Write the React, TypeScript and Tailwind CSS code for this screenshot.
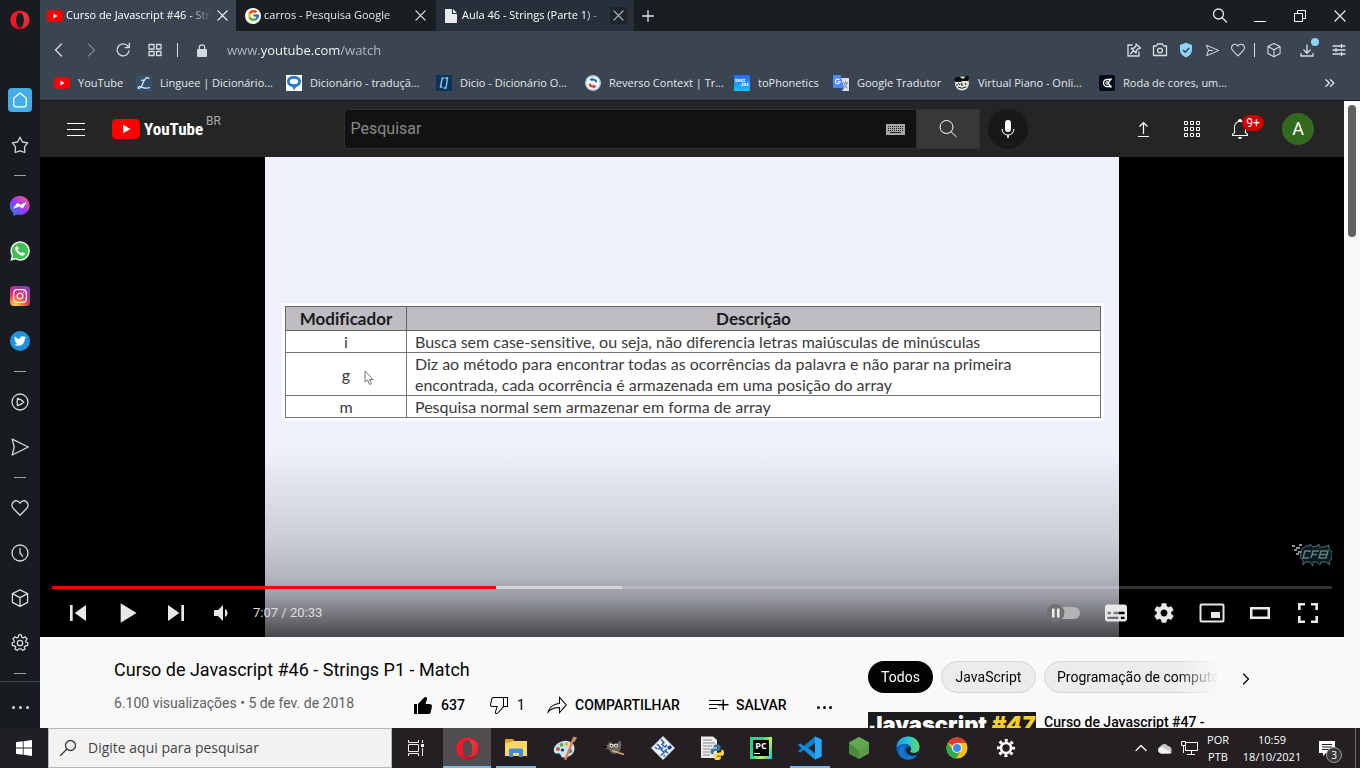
import React from "react";
import type { ReactNode } from "react";
import { FaFacebookMessenger, FaInstagram, FaTwitter } from "react-icons/fa6";
import { FcGoogle } from "react-icons/fc";

type IconProps = {
  className?: string;
  box?: string;
  children: ReactNode;
};

function Line({ className = "size-5", box = "0 0 20 20", children }: IconProps) {
  return (
    <svg
      className={className}
      viewBox={box}
      fill="none"
      stroke="currentColor"
      strokeWidth="1.3"
      strokeLinecap="round"
      strokeLinejoin="round"
      aria-hidden="true"
    >
      {children}
    </svg>
  );
}

function Solid({ className = "size-5", box = "0 0 24 24", children }: IconProps) {
  return (
    <svg className={className} viewBox={box} fill="currentColor" aria-hidden="true">
      {children}
    </svg>
  );
}

const heartPath =
  "M10 17.3 L3.6 10.7 C1.2 8.2 1.5 5.2 3.5 3.7 C5.8 2 8.4 2.7 10 5.2 C11.6 2.7 14.2 2 16.5 3.7 C18.5 5.2 18.8 8.2 16.4 10.7 Z";
const cubePath = "M10 1.8 L17.6 5.6 V14.4 L10 18.4 L2.4 14.4 V5.6 Z M2.4 5.6 L10 9.6 L17.6 5.6 M10 9.6 V18.4";
const sendPath = "M2.2 2.2 L18.3 10 L2.2 18 L4.2 10 Z";

function OperaLogo({ className = "size-5" }: { className?: string }) {
  return (
    <svg className={className} viewBox="0 0 24 24" aria-hidden="true">
      <defs>
        <linearGradient id="opera" x1="0" y1="0" x2="1" y2="1">
          <stop offset="0" stopColor="#ff1b2d" />
          <stop offset="0.5" stopColor="#ee1426" />
          <stop offset="1" stopColor="#a70014" />
        </linearGradient>
      </defs>
      <path
        fill="url(#opera)"
        fillRule="evenodd"
        d="M12 0.5a11.7 11.5 0 1 0 0 23a11.7 11.5 0 1 0 0-23zM12 3.200c3 0 4.700 4 4.700 8.800s-1.700 8.800-4.700 8.800s-4.700-4-4.700-8.800s1.700-8.800 4.700-8.800z"
      />
      <path fill="#ff6a70" opacity="0.35" d="M12 3.200c4-1 8 0 10 3.500c1.500 3 1.500 7.500 0 10.500c-2 3.500-6 4.600-10 3.600c3 0 4.700-4 4.700-8.800s-1.700-8.800-4.700-8.800z" />
    </svg>
  );
}

function YouTubeMark({ className }: { className: string }) {
  return (
    <svg className={className} viewBox="0 0 28 20" aria-hidden="true">
      <rect width="28" height="20" rx="4.500" fill="#f00" />
      <path d="M11.200 5.700 L18.500 10 L11.200 14.300 Z" fill="#fff" />
    </svg>
  );
}

function Cross({ className = "size-[11px]" }: { className?: string }) {
  return (
    <Line className={className} box="0 0 12 12">
      <path d="M1 1 L11 11 M11 1 L1 11" />
    </Line>
  );
}

function SideItem({ label, children }: { label: string; children: ReactNode }) {
  return (
    <button aria-label={label} className="flex h-[45px] w-10 shrink-0 items-center justify-center">
      {children}
    </button>
  );
}

function SideDash() {
  return (
    <div className="flex h-4 w-10 shrink-0 items-center justify-center">
      <div className="h-px w-3 bg-[#98a0a8]" />
    </div>
  );
}

function Sidebar() {
  return (
    <aside className="flex w-10 shrink-0 flex-col bg-[#181b20] text-[#d5d9dd]">
      <button aria-label="Menu do Opera" className="flex h-10 shrink-0 items-center justify-center">
        <OperaLogo />
      </button>
      <div className="flex flex-1 flex-col pt-[37px]">
        <SideItem label="Início">
          <span className="flex size-6 items-center justify-center rounded-sm bg-[#43ade8] text-white">
            <Line className="size-5">
              <path d="M10 3 L16.300 8.200 V14.500 Q16.300 16.800 14 16.800 H6 Q3.700 16.800 3.700 14.500 V8.200 Z" />
            </Line>
          </span>
        </SideItem>
        <SideItem label="Favoritos">
          <Line>
            <path d="M10 2.200 L12.400 7 L17.700 7.900 L14.500 11.900 L14.800 17.500 L10 15.900 L5.200 17.500 L5.500 11.900 L2.300 7.900 L7.600 7 Z" />
          </Line>
        </SideItem>
        <SideDash />
        <SideItem label="Messenger">
          <svg className="size-5" viewBox="0 0 20 20" aria-hidden="true">
            <defs>
              <linearGradient id="msg" x1="1" y1="0" x2="0" y2="1">
                <stop offset="0" stopColor="#ff6968" />
                <stop offset="0.500" stopColor="#a334fa" />
                <stop offset="1" stopColor="#0a8cff" />
              </linearGradient>
            </defs>
            <path d="M10 0 A9.800 9.500 0 1 1 7 18.600 L3.200 20 V16.700 A9.800 9.500 0 0 1 10 0 Z" fill="url(#msg)" />
            <path d="M3.800 12.200 L7.500 7.200 L10.500 9.300 L16 6.800 L12.300 12.200 L9.200 10 Z" fill="#fff" stroke="#fff" strokeLinejoin="round" />
          </svg>
        </SideItem>
        <SideItem label="WhatsApp">
          <svg className="size-5" viewBox="0 0 20 20" aria-hidden="true">
            <path d="M0.300 19.700 L1.700 14.800 A9.700 9.700 0 1 1 5.500 18.500 Z" fill="#f2f4f2" />
            <path d="M2.200 17.800 L3.200 14.500 A8.200 8.200 0 1 1 5.800 17 Z" fill="#3fbf50" />
            <path d="M6.800 5.200 C7.300 4.900 7.700 5.200 8 6 L8.600 7.300 C8.700 7.800 7.900 8.400 7.700 8.800 C8.500 10.500 9.600 11.500 11.200 12.200 C11.700 12 12.200 10.900 12.700 11.100 L14.500 12 C15 12.300 14.800 13.300 14.200 14 C12.500 15.300 10 14.500 8 12.600 C6 10.700 4.600 8.300 5.300 6.700 C5.700 5.900 6.200 5.400 6.800 5.200 Z" fill="#fff" />
          </svg>
        </SideItem>
        <SideItem label="Instagram">
          <span className="flex size-5 items-center justify-center rounded-sm bg-[radial-gradient(circle_at_25%_105%,#ffdd55_0%,#ff7a3c_30%,#d6306f_55%,#8a3ac8_90%)] text-white">
            <FaInstagram className="size-4" />
          </span>
        </SideItem>
        <SideItem label="Twitter">
          <span className="flex size-5 items-center justify-center rounded-full bg-[#1d93dd] text-white">
            <FaTwitter className="size-3" />
          </span>
        </SideItem>
        <SideDash />
        <SideItem label="Player">
          <Line>
            <circle cx="10" cy="10" r="8" />
            <path d="M7.500 6.500 Q11.500 7.500 13.800 10 Q11.500 12.500 7.500 13.500 Q6.800 10 7.500 6.500 Z" />
          </Line>
        </SideItem>
        <SideItem label="Meu Flow">
          <Line>
            <path d={sendPath} />
          </Line>
        </SideItem>
        <SideDash />
        <SideItem label="Marcadores">
          <Line>
            <path d={heartPath} />
          </Line>
        </SideItem>
        <SideItem label="Histórico">
          <Line>
            <circle cx="10" cy="10" r="8" />
            <path d="M10 5.500 V10 L12.500 13.200" />
          </Line>
        </SideItem>
        <SideItem label="Extensões">
          <Line>
            <path d={cubePath} />
          </Line>
        </SideItem>
        <SideItem label="Configurações">
          <Line>
            <circle cx="10" cy="10" r="2.700" />
            <path d="M8.300 4.200 L8.700 1.900 H11.300 L11.700 4.200 L13 4.900 L15.200 3.800 L17 6 L15.600 8 L15.900 9.200 L18 10 L17.500 12.500 L15.200 12.800 L14.300 14 L15 16.200 L12.700 17.400 L11.200 15.900 H8.800 L7.300 17.400 L5 16.200 L5.700 14 L4.800 12.800 L2.500 12.500 L2 10 L4.100 9.200 L4.400 8 L3 6 L4.800 3.800 L7 4.900 Z" />
          </Line>
        </SideItem>
        <SideDash />
        <button
          aria-label="Mais"
          className="flex flex-1 items-center justify-center gap-1 border-t border-[#3c4653] pt-1"
        >
          <span className="size-[3px] rounded-full bg-[#e0e4e8]" />
          <span className="size-[3px] rounded-full bg-[#e0e4e8]" />
          <span className="size-[3px] rounded-full bg-[#e0e4e8]" />
        </button>
      </div>
    </aside>
  );
}

function Tab({
  title,
  icon,
  tone,
  close = "",
}: {
  title: string;
  icon: ReactNode;
  tone: string;
  close?: string;
}) {
  return (
    <div className={`flex items-center ${tone}`}>
      <span className="flex w-4 shrink-0 justify-center">{icon}</span>
      <button className="ml-[3px] min-w-0 flex-1 overflow-hidden text-left whitespace-nowrap [mask-image:linear-gradient(to_right,#000_82%,transparent_99%)]">
        {title}
      </button>
      <button aria-label="Fechar aba" className={`flex size-[17px] shrink-0 items-center justify-center ${close}`}>
        <Cross />
      </button>
    </div>
  );
}

function TabBar() {
  return (
    <div className="flex h-[31px] bg-[#1a1d21] text-[11px] text-[#e6e9ec]">
      <Tab
        title="Curso de Javascript #46 - Strings"
        tone="w-[196px] bg-[#3b4551] pr-[5px] pl-[7px] text-white"
        icon={<YouTubeMark className="h-3 w-4" />}
      />
      <Tab
        title="carros - Pesquisa Google"
        tone="w-[200px] pr-[7px] pl-[9px]"
        icon={
          <span className="flex size-4 shrink-0 items-center justify-center rounded-full bg-white">
            <FcGoogle className="size-[13px]" />
          </span>
        }
      />
      <Tab
        title="Aula 46 - Strings (Parte 1) -"
        tone="w-[198px] bg-[#27303a] pr-[7px] pl-[7px] text-white"
        close="bg-[#1e242c] text-[#b4bac0]"
        icon={
          <svg className="h-[14px] w-3" viewBox="0 0 12 14" aria-hidden="true">
            <path d="M0 0 H7 V5 H12 V14 H0 Z M8 0 L12 4 H8 Z" fill="#e8ebee" />
          </svg>
        }
      />
      <button aria-label="Nova aba" className="flex w-7 items-center justify-center">
        <Line className="size-3" box="0 0 12 12">
          <path d="M6 0.700 V11.300 M0.700 6 H11.300" />
        </Line>
      </button>
      <div className="ml-auto flex">
        <button aria-label="Pesquisar abas" className="flex w-10 items-center justify-center">
          <Line className="size-4" box="0 0 16 16">
            <circle cx="6.500" cy="6" r="5" />
            <path d="M10.200 9.800 L14.500 14" />
          </Line>
        </button>
        <button aria-label="Minimizar" className="flex w-10 items-center justify-center pt-[11px]">
          <span className="h-px w-3 bg-white" />
        </button>
        <button aria-label="Restaurar" className="flex w-10 items-center justify-center">
          <svg className="size-3" viewBox="0 0 12 12" fill="none" stroke="#fff" aria-hidden="true">
            <path d="M0.500 3.500 H8.500 V11.500 H0.500 Z M3.500 3.500 V0.500 H11.500 V8.500 H8.500" />
          </svg>
        </button>
        <button aria-label="Fechar" className="flex w-10 items-center justify-center">
          <Cross className="size-3" />
        </button>
      </div>
    </div>
  );
}

function ToolButton({ label, width = "w-[26px]", children }: { label: string; width?: string; children: ReactNode }) {
  return (
    <button aria-label={label} className={`relative flex h-8 items-center justify-center ${width}`}>
      {children}
    </button>
  );
}

function AddressBar() {
  return (
    <div className="flex h-[38px] items-center pr-[5px] pl-[3px] text-[#d9dde1]">
      <ToolButton label="Voltar" width="w-8">
        <Line className="size-4" box="0 0 16 16">
          <path d="M10.500 2 L4.500 8 L10.500 14" />
        </Line>
      </ToolButton>
      <ToolButton label="Avançar" width="w-8">
        <Line className="size-4 text-[#76808a]" box="0 0 16 16">
          <path d="M5.500 2 L11.500 8 L5.500 14" />
        </Line>
      </ToolButton>
      <ToolButton label="Recarregar" width="w-8">
        <Line className="size-4" box="0 0 16 16">
          <path d="M14 9 A6 6 0 1 1 12.800 4.200 L14 5.500 M14.300 1.500 V5.700 H10.200" />
        </Line>
      </ToolButton>
      <ToolButton label="Speed Dial" width="w-8">
        <Line className="size-4" box="0 0 16 16">
          <path d="M2 2.500 H7 V7 H2 Z M9.500 2.500 H14 V7 H9.500 Z M2 9.500 H7 V13.500 H2 Z M9.500 9.500 H14 V13.500 H9.500 Z" />
        </Line>
      </ToolButton>
      <span className="ml-1.5 h-3.5 w-px bg-[#d9dde1]" />
      <ToolButton label="Informações do site" width="ml-3 w-6">
        <svg className="h-[13px] w-[10px]" viewBox="0 0 10 13" aria-hidden="true">
          <path d="M2.300 6 V3.500 A2.700 2.700 0 0 1 7.700 3.500 V6" fill="none" stroke="#d5d9dd" strokeWidth="1.300" />
          <rect y="5" width="10" height="8" rx="1" fill="#d5d9dd" />
        </svg>
      </ToolButton>
      <input
        aria-label="Endereço"
        type="text"
        defaultValue="www.youtube.com/watch"
        className="mt-0.5 ml-[13px] min-w-0 flex-1 bg-[linear-gradient(to_right,#b4bcc4_33px,#fff_33px,#fff_113px,#b4bcc4_113px)] bg-clip-text text-[13px] text-transparent caret-white outline-none"
      />
      <ToolButton label="Fixar">
        <Line className="size-4" box="0 0 16 16">
          <path d="M6 3 H2 V14 H13 V10 M10 2 L14.500 6 L12.500 6.500 L10.500 8.500 L10 11 L5.500 6.500 L8 6 L10 4 Z M7.500 8.800 L4.500 11.800" />
        </Line>
      </ToolButton>
      <ToolButton label="Instantâneo">
        <Line className="size-4" box="0 0 16 16">
          <path d="M1.500 4 H4.500 L5.500 2 H10.500 L11.500 4 H14.500 V13.500 H1.500 Z" />
          <circle cx="8" cy="8.500" r="2.400" />
        </Line>
      </ToolButton>
      <ToolButton label="Bloqueador de anúncios">
        <svg className="size-4" viewBox="0 0 16 16" aria-hidden="true">
          <path d="M8 0.800 L14 3 V8 Q14 13 8 15.500 Q2 13 2 8 V3 Z" fill="#8fd3fb" />
          <path d="M5 8 L7.200 10.200 L11.200 6" fill="none" stroke="#3b4551" strokeWidth="1.600" />
        </svg>
      </ToolButton>
      <ToolButton label="Enviar ao Flow">
        <Line className="size-[15px]">
          <path d="M2.200 3 L18.300 10 L2.200 17 L4.500 10 Z M4.500 10 H10" />
        </Line>
      </ToolButton>
      <ToolButton label="Favoritar">
        <Line className="size-4">
          <path d={heartPath} />
        </Line>
      </ToolButton>
      <span className="ml-[3px] h-3.5 w-px bg-[#d9dde1]" />
      <ToolButton label="Extensões" width="ml-[3px] w-8">
        <Line className="size-4">
          <path d={cubePath} />
        </Line>
      </ToolButton>
      <ToolButton label="Downloads" width="w-[33px]">
        <Line className="size-4" box="0 0 16 16">
          <path d="M8 3 V11 M4.800 8 L8 11.200 L11.200 8 M2 11.500 V14 H14 V11.500" />
        </Line>
        <span className="absolute top-1 right-1 size-2 rounded-full bg-[#8fd3fb]" />
      </ToolButton>
      <ToolButton label="Configuração fácil" width="w-8">
        <Line className="size-4" box="0 0 16 16">
          <path d="M2 4 H14 M2 8 H14 M2 12 H14 M10.500 2.500 V5.500 M5 6.500 V9.500 M10.500 10.500 V13.500" />
        </Line>
      </ToolButton>
    </div>
  );
}

const bookmarks: { label: string; width: string; icon: ReactNode }[] = [
  { label: "YouTube", width: "w-[82px]", icon: <YouTubeMark className="h-3 w-4" /> },
  {
    label: "Linguee | Dicionário...",
    width: "w-[150px]",
    icon: (
      <svg className="size-4" viewBox="0 0 16 16" aria-hidden="true">
        <rect width="16" height="16" fill="#34506b" />
        <path d="M13 4 Q12 1.500 9.500 3.500 Q7 7 5.500 11.500 Q4 14 2 13 Q2 11 5.500 12 Q9 14 14 12.500 M5 5 Q7 6 9.500 4" fill="none" stroke="#e6edf5" strokeWidth="1.200" />
      </svg>
    ),
  },
  {
    label: "Dicionário - traduçã...",
    width: "w-[150px]",
    icon: (
      <svg className="size-4" viewBox="0 0 16 16" aria-hidden="true">
        <rect width="16" height="16" fill="#fff" />
        <path d="M8 1 C12 1 15 3 15 6.500 C15 9.500 12.500 11.500 10 12 L8 15.500 L6.500 12 C3.500 11.500 1 9.500 1 6.500 C1 3 4 1 8 1 Z" fill="#2a78c4" />
        <ellipse cx="8" cy="6.500" rx="4.200" ry="2.800" fill="#fff" />
      </svg>
    ),
  },
  {
    label: "Dicio - Dicionário O...",
    width: "w-[149px]",
    icon: (
      <svg className="size-4" viewBox="0 0 16 16" aria-hidden="true">
        <rect width="16" height="16" fill="#0b3558" />
        <path d="M8 3 H6.200 L4.500 12 H6.500 M9 3 H11.500 L10 13 H7.500" fill="none" stroke="#8fc7ee" strokeWidth="1.400" />
      </svg>
    ),
  },
  {
    label: "Reverso Context | Tr...",
    width: "w-[149px]",
    icon: (
      <svg className="size-4" viewBox="0 0 16 16" aria-hidden="true">
        <circle cx="8" cy="8" r="7.800" fill="#fff" />
        <circle cx="8" cy="8" r="7" fill="none" stroke="#7bb7d8" strokeWidth="0.800" />
        <path d="M11.500 7.500 Q11 4.500 8 4.500 H7" fill="none" stroke="#1a6fae" strokeWidth="2" />
        <path d="M7.500 2.200 V6.800 L4.500 4.500 Z" fill="#1a6fae" />
        <path d="M4.500 8.500 Q5 11.500 8 11.500 H9" fill="none" stroke="#e0332c" strokeWidth="2" />
        <path d="M8.500 9.200 V13.800 L11.500 11.500 Z" fill="#e0332c" />
      </svg>
    ),
  },
  {
    label: "toPhonetics",
    width: "w-[99px]",
    icon: (
      <svg className="size-4" viewBox="0 0 16 16" aria-hidden="true">
        <defs>
          <linearGradient id="phon" x1="0" y1="0" x2="0" y2="1">
            <stop offset="0" stopColor="#2468f0" />
            <stop offset="1" stopColor="#10c4ff" />
          </linearGradient>
        </defs>
        <rect width="16" height="16" fill="url(#phon)" />
        <text x="1" y="7" fontSize="5" fontWeight="700" fill="#fff">
          text
        </text>
        <text x="6" y="11" fontSize="5" fontWeight="700" fill="#fff">
          .txt
        </text>
      </svg>
    ),
  },
  {
    label: "Google Tradutor",
    width: "w-[121px]",
    icon: (
      <svg className="size-4" viewBox="0 0 16 16" aria-hidden="true">
        <path d="M6 3 H16 V16 H9 Z" fill="#dcdfe2" />
        <path d="M10 8 H15 M12.500 6.500 V8 M14 8 Q13 12 10.500 13 M11 9 Q12 12 14.500 13" fill="none" stroke="#68788a" strokeWidth="0.900" />
        <path d="M0 0 H7.500 L11 13 H1 Q0 13 0 12 Z" fill="#4a8af4" />
        <path d="M8 13 H11 L9 16 Z" fill="#2a4fc0" />
        <path d="M6.500 5 A2.300 2.300 0 1 0 7 6.500 H4.800" fill="none" stroke="#fff" strokeWidth="1.100" />
      </svg>
    ),
  },
  {
    label: "Virtual Piano - Onli...",
    width: "w-[145px]",
    icon: (
      <svg className="size-4" viewBox="0 0 16 16" aria-hidden="true">
        <circle cx="8" cy="8.500" r="7" fill="#e4e2dd" />
        <path d="M0 5 Q2 1 6 2 L9 4 L13 0.500 L15 2 L14 6 L9 6 L6 7 L2 7 Z" fill="#0e0e0e" />
        <path d="M4 8 L6 10 M8 8 L7 10 H9 M11 8 L12 10 M4 12 Q8 14.500 12 12 M3 9 V11" fill="none" stroke="#222" strokeWidth="1" />
      </svg>
    ),
  },
  {
    label: "Roda de cores, um...",
    width: "w-[150px]",
    icon: (
      <svg className="size-4" viewBox="0 0 16 16" aria-hidden="true">
        <rect width="16" height="16" rx="2" fill="#040b1c" />
        <path d="M12.500 3.500 L9 8 L12.500 12.500 M11.500 4.500 H8 A3.500 3.500 0 0 0 8 11.500 H11.500" fill="none" stroke="#fff" strokeWidth="1.300" />
        <circle cx="8" cy="8" r="1.300" fill="none" stroke="#fff" />
      </svg>
    ),
  },
];

function BookmarkBar() {
  return (
    <nav className="flex h-8 items-center border-b border-[#15181c] pr-[25px] pb-[3px] pl-[14px] text-[11px] text-[#e3e6e9]">
      {bookmarks.map((b) => (
        <a key={b.label} href="#" className={`flex shrink-0 items-center gap-2 whitespace-nowrap ${b.width}`}>
          <span className="flex w-4 shrink-0 justify-center">{b.icon}</span>
          {b.label}
        </a>
      ))}
      <button aria-label="Mais favoritos" className="ml-auto">
        <Line className="h-2 w-2.5" box="0 0 10 8">
          <path d="M1 0.700 L4.300 4 L1 7.300 M5.500 0.700 L8.800 4 L5.500 7.300" />
        </Line>
      </button>
    </nav>
  );
}

function YouTubeHeader() {
  return (
    <header className="flex h-14 shrink-0 items-center bg-[#252525] pr-[30px] pl-6 font-[Roboto,sans-serif] text-white">
      <div className="flex w-[175px] items-center">
        <button aria-label="Guia" className="flex size-6 items-center justify-center">
          <Solid className="h-[13px] w-[18px]" box="0 0 18 13">
            <path d="M0 0 H18 V1 H0 Z M0 6 H18 V7 H0 Z M0 12 H18 V13 H0 Z" />
          </Solid>
        </button>
        <a href="#" aria-label="Página inicial do YouTube" className="ml-6 flex items-center">
          <YouTubeMark className="h-5 w-7" />
          <span className="ml-1 w-[58px] font-['Roboto_Condensed','Open_Sans_Condensed','Noto_Sans_Condensed',Roboto,sans-serif] text-[17px]/5 font-bold">
            YouTube
          </span>
        </a>
        <span className="mb-4 ml-1 text-[12px]/4 text-[#aaa]">BR</span>
      </div>
      <form className="mx-auto flex h-10 items-center" onSubmit={(e) => e.preventDefault()}>
        <div className="flex h-10 w-[573px] items-center rounded-l-sm border border-[#303030] bg-[#121212] pr-[11px] pl-1.5">
          <input
            aria-label="Pesquisar"
            placeholder="Pesquisar"
            className="min-w-0 flex-1 bg-transparent text-base outline-none placeholder:text-[#888]"
          />
          <svg className="h-[11px] w-[19px]" viewBox="0 0 19 11" aria-hidden="true">
            <rect width="19" height="11" fill="#a6a6a6" />
            <path d="M2 2.500 H17 M2 4.500 H17 M2 6.500 H17" stroke="#222" strokeDasharray="1 1" />
            <path d="M4 8.500 H15" stroke="#222" />
          </svg>
        </div>
        <button aria-label="Buscar" className="flex h-10 w-[63px] items-center justify-center border border-l-0 border-[#303030] bg-[#383838]">
          <svg className="size-5" viewBox="0 0 20 20" fill="none" stroke="currentColor" aria-hidden="true">
            <circle cx="8.500" cy="8" r="6.500" />
            <path d="M13 12.700 L18.500 18" />
          </svg>
        </button>
        <button aria-label="Pesquisar com sua voz" className="ml-2 flex size-10 items-center justify-center rounded-full bg-[#181818]">
          <Solid className="size-6">
            <path d="M12 3 A3 3 0 0 1 15 6 V12 A3 3 0 0 1 9 12 V6 A3 3 0 0 1 12 3 Z M18.500 12 H17.500 A5.500 5.500 0 0 1 6.500 12 H5.500 A6.500 6.500 0 0 0 11.200 18.400 V21 H12.800 V18.400 A6.500 6.500 0 0 0 18.500 12 Z" />
          </Solid>
        </button>
      </form>
      <div className="flex items-center gap-6">
        <button aria-label="Criar">
          <svg className="size-6" viewBox="0 0 24 24" fill="none" stroke="currentColor" aria-hidden="true">
            <path d="M6 19.500 H17 M11.500 17 V5.500 M7.500 9.500 L11.500 5.500 L15.500 9.500" strokeWidth="1.200" />
          </svg>
        </button>
        <button aria-label="Apps do YouTube">
          <svg className="size-6" viewBox="0 0 24 24" fill="none" stroke="currentColor" aria-hidden="true">
            <path d="M4.500 4.500 h3 v3 h-3 z m6 0 h3 v3 h-3 z m6 0 h3 v3 h-3 z m-12 6 h3 v3 h-3 z m6 0 h3 v3 h-3 z m6 0 h3 v3 h-3 z m-12 6 h3 v3 h-3 z m6 0 h3 v3 h-3 z m6 0 h3 v3 h-3 z" />
          </svg>
        </button>
        <button aria-label="Notificações" className="relative">
          <Solid className="size-6">
            <path d="M10 20 H14 C14 21.100 13.100 22 12 22 C10.900 22 10 21.100 10 20 Z M20 17.350 V19 H4 V17.350 L6 15.470 V10.320 C6 7.400 7.560 5.100 10 4.340 V3.960 C10 2.540 11.490 1.460 12.990 2.200 C13.640 2.520 14 3.230 14 3.960 V4.350 C16.440 5.100 18 7.410 18 10.330 V15.480 Z M19 17.770 L17 15.890 V10.420 C17 7.950 15.810 6.060 13.870 5.320 C12.610 4.790 11.230 4.820 10.030 5.350 C8.150 6.110 7 7.990 7 10.420 V15.890 L5 17.770 V18 H19 Z" />
          </Solid>
          <span className="absolute -top-0.5 left-3.5 flex h-4 w-[22px] items-center justify-center rounded-full bg-[#cc0000] text-[12px]/4">
            9+
          </span>
        </button>
        <button aria-label="Conta" className="ml-1.5 flex size-8 items-center justify-center rounded-full bg-[#33691e] text-lg">
          A
        </button>
      </div>
    </header>
  );
}

const modifiers = [
  { key: "i", height: "h-[21px]", text: "Busca sem case-sensitive, ou seja, não diferencia letras maiúsculas de minúsculas" },
  {
    key: "g",
    height: "h-[43px]",
    text: "Diz ao método para encontrar todas as ocorrências da palavra e não parar na primeira encontrada, cada ocorrência é armazenada em uma posição do array",
  },
  { key: "m", height: "h-[22px]", text: "Pesquisa normal sem armazenar em forma de array" },
];

function Slide() {
  return (
    <div className="flex aspect-video h-full items-start justify-center bg-[#eef0fc] pt-[146px] pl-0.5">
      <div className="w-[822px] bg-white p-[3px]">
        <table className="w-full border-collapse font-[Lato,sans-serif] text-[16px]/[21px] text-[#3a3a3c] [font-variant-ligatures:none]">
          <thead>
            <tr className="h-6 bg-[#bfbdc1] text-[17px]/[22px] text-[#1c1b1e]">
              <th className="w-[121px] border border-[#666468] p-0">Modificador</th>
              <th className="border border-[#666468] p-0">Descrição</th>
            </tr>
          </thead>
          <tbody>
            {modifiers.map((m) => (
              <tr key={m.key} className={m.height}>
                <td className="border border-[#77757a] p-0 text-center">{m.key}</td>
                <td className="border border-[#77757a] py-0 pr-16 pl-2">{m.text}</td>
              </tr>
            ))}
          </tbody>
        </table>
      </div>
    </div>
  );
}

function PlayerButton({ label, width = "w-12", children }: { label: string; width?: string; children: ReactNode }) {
  return (
    <button aria-label={label} className={`flex h-12 items-center justify-center ${width}`}>
      {children}
    </button>
  );
}

function Player() {
  return (
    <div className="relative flex h-[480px] shrink-0 justify-center bg-black font-[Roboto,sans-serif] text-[#e8e8e8]">
      <Slide />
      <svg className="absolute top-[213px] left-[324px] h-4 w-2.5" viewBox="0 0 10 16" aria-hidden="true">
        <path d="M1 1 V12 L3.500 10 L5.500 14.500 L7.300 13.500 L5.500 9.500 H9 Z" fill="#fff" stroke="#77757a" />
      </svg>
      <svg className="absolute right-3 bottom-[70px] h-6 w-10" viewBox="0 0 40 24" fill="none" aria-hidden="true">
        <path d="M10 6 L14 3 H18 V1 L21 4 L25 3 L27 1 V4 H32 L37 2 V6 L40 9 V15 L37 19 L38 22 L34 19 H29 L28 22 L25 19 H21 V23 L18 19 H13 L11 22 V18 L8 14 Z" fill="#06222a" stroke="#5f8791" />
        <path d="M19 8 H13 L11 15 H17 M27 8 H21 L19 15 M20 11.500 H25 M29 8 H36 L34 15 H27 Z M28 11.500 H35" stroke="#84949a" strokeWidth="1.500" />
        <path d="M0 3 H3 M4 5 H8 M2 7 H5 M6 9 H9 M4 11 H7 M7 2 H10" stroke="#a9adb0" strokeWidth="2" />
      </svg>
      <div className="absolute inset-x-0 bottom-0 bg-[linear-gradient(to_bottom,transparent_0%,rgba(0,0,0,.15)_48%,rgba(0,0,0,.25)_68%,rgba(0,0,0,.36)_79%,rgba(0,0,0,.7)_100%)] px-3 pt-[136px]">
        <div className="flex h-[3px] bg-white/20" role="progressbar" aria-label="Progresso" aria-valuenow={427} aria-valuemax={1233}>
          <div className="w-[34.7%] bg-[#f00]" />
          <div className="w-[9.8%] bg-white/40" />
        </div>
        <div className="flex h-12 items-center">
          <PlayerButton label="Anterior" width="w-[52px]">
            <Solid className="size-12" box="0 0 36 36">
              <path d="m 12,12 h 2 v 12 h -2 z m 3.500,6 8.500,6 V 12 z" />
            </Solid>
          </PlayerButton>
          <PlayerButton label="Reproduzir">
            <Solid className="size-11" box="0 0 36 36">
              <path d="M 12,26 25,18 12,10 z" />
            </Solid>
          </PlayerButton>
          <PlayerButton label="Próximo">
            <Solid className="size-12" box="0 0 36 36">
              <path d="M 12,24 20.500,18 12,12 V 24 z M 22,12 v 12 h 2 V 12 h -2 z" />
            </Solid>
          </PlayerButton>
          <PlayerButton label="Volume" width="w-[42px]">
            <Solid className="size-[18px]" box="6 9 18 18">
              <path d="M8,21 L12,21 L17,26 L17,10 L12,15 L8,15 Z M19,14 L19,22 C20.480,21.320 21.500,19.770 21.500,18 C21.500,16.260 20.480,14.740 19,14 Z" />
            </Solid>
          </PlayerButton>
          <span className="ml-[11px] text-[13px] text-[#ddd]">7:07 / 20:33</span>
          <div className="ml-auto flex">
            <PlayerButton label="Reprodução automática" width="w-[58px]">
              <svg className="h-5 w-9" viewBox="0 0 36 20" aria-hidden="true">
                <rect x="5" y="4" width="30" height="12" rx="6" fill="#b2b3b5" />
                <circle cx="10.500" cy="10" r="9" fill="#717171" />
                <path d="M7 5.500 H9.500 V14.500 H7 Z M12 5.500 H14.500 V14.500 H12 Z" fill="#eee" />
              </svg>
            </PlayerButton>
            <PlayerButton label="Legendas">
              <Solid className="size-[44px]" box="0 0 36 36">
                <path
                  fillRule="evenodd"
                  d="M11,11 C9.890,11 9,11.900 9,13 L9,23 C9,24.100 9.890,25 11,25 L25,25 C26.100,25 27,24.100 27,23 L27,13 C27,11.900 26.100,11 25,11 Z M11,17 L14,17 L14,19 L11,19 Z M20,23 L11,23 L11,21 L20,21 Z M25,23 L22,23 L22,21 L25,21 Z M25,19 L16,19 L16,17 L25,17 Z"
                />
              </Solid>
            </PlayerButton>
            <PlayerButton label="Detalhes">
              <Solid className="size-[44px]" box="0 0 36 36">
                <path d="m 23.940,18.780 c .03,-0.250 .05,-0.510 .05,-0.780 0,-0.270 -0.020,-0.520 -0.050,-0.780 l 1.680,-1.320 c .15,-0.120 .19,-0.330 .09,-0.510 l -1.600,-2.760 c -0.090,-0.170 -0.310,-0.240 -0.480,-0.170 l -1.990,.8 c -0.410,-0.320 -0.860,-0.580 -1.350,-0.780 l -0.300,-2.120 c -0.020,-0.190 -0.190,-0.330 -0.390,-0.330 l -3.200,0 c -0.200,0 -0.360,.14 -0.390,.33 l -0.300,2.120 c -0.480,.2 -0.930,.47 -1.350,.78 l -1.990,-0.800 c -0.180,-0.070 -0.390,0 -0.480,.17 l -1.600,2.760 c -0.100,.17 -0.050,.39 .09,.51 l 1.680,1.320 c -0.030,.25 -0.050,.52 -0.050,.78 0,.26 .02,.52 .05,.78 l -1.680,1.320 c -0.150,.12 -0.190,.33 -0.090,.51 l 1.600,2.760 c .09,.17 .31,.24 .48,.17 l 1.990,-0.800 c .41,.32 .86,.58 1.350,.78 l .3,2.120 c .02,.19 .19,.33 .39,.33 l 3.200,0 c .2,0 .36,-0.140 .39,-0.330 l .3,-2.120 c .48,-0.200 .93,-0.470 1.350,-0.780 l 1.990,.8 c .18,.07 .39,0 .48,-0.170 l 1.600,-2.760 c .09,-0.170 .05,-0.390 -0.090,-0.510 l -1.680,-1.320 0,0 z m -5.940,2.010 c -1.540,0 -2.800,-1.250 -2.800,-2.800 0,-1.540 1.250,-2.800 2.800,-2.800 1.540,0 2.800,1.250 2.800,2.800 0,1.540 -1.250,2.800 -2.800,2.800 z" />
              </Solid>
            </PlayerButton>
            <PlayerButton label="Miniplayer">
              <svg className="h-5 w-[26px]" viewBox="0 0 26 20" fill="none" aria-hidden="true">
                <rect x="1.500" y="1.500" width="23" height="17" rx="1" stroke="#e8e8e8" strokeWidth="2" />
                <rect x="12" y="9" width="9" height="6" fill="#e8e8e8" />
              </svg>
            </PlayerButton>
            <PlayerButton label="Modo teatro">
              <svg className="h-3 w-5" viewBox="0 0 20 12" fill="none" aria-hidden="true">
                <rect x="1.250" y="1.250" width="17.500" height="9.500" stroke="#e8e8e8" strokeWidth="2.500" />
              </svg>
            </PlayerButton>
            <PlayerButton label="Tela inteira">
              <svg className="size-5" viewBox="0 0 20 20" fill="none" stroke="#e8e8e8" strokeWidth="2.600" aria-hidden="true">
                <path d="M1.300 7 V1.300 H7 M13 1.300 H18.700 V7 M18.700 13 V18.700 H13 M7 18.700 H1.300 V13" />
              </svg>
            </PlayerButton>
          </div>
        </div>
      </div>
    </div>
  );
}

function VideoDetails() {
  return (
    <div className="flex shrink-0 gap-7 px-[74px] font-[Roboto,sans-serif] text-[#030303]">
      <section className="min-w-0 flex-1 pt-[21px]">
        <h1 className="text-[18px]/6">Curso de Javascript #46 - Strings P1 - Match</h1>
        <div className="mt-[11px] flex h-6 items-center pr-1">
          <span className="flex-1 pb-1 text-sm whitespace-nowrap text-[#606060]">
            6.100 visualizações • 5 de fev. de 2018
          </span>
          <div className="flex items-center text-sm font-medium">
            <button className="flex w-[76px] items-center gap-1.5">
              <Solid className="size-6">
                <path d="M3 11 H6 V21 H3 Z M18.770 11 H14.540 L16.060 6.060 C16.380 5.030 15.540 4 14.380 4 C13.800 4 13.240 4.240 12.860 4.650 L7 11 V21 H17.430 C18.490 21 19.410 20.330 19.620 19.390 L20.960 13.390 C21.230 12.150 20.180 11 18.770 11 Z" />
              </Solid>
              637
            </button>
            <button className="flex w-[58px] items-center gap-1.5 font-normal">
              <Solid className="size-6">
                <path d="M17 4 H6.570 C5.500 4 4.590 4.670 4.380 5.610 L3.040 11.610 C2.770 12.850 3.820 14 5.230 14 H9.460 L7.940 18.940 C7.620 19.970 8.460 21 9.620 21 C10.210 21 10.760 20.760 11.140 20.350 L17 14 H21 V4 Z M10.400 19.670 C10.210 19.880 9.920 20 9.620 20 C9.260 20 9.200 20 9 19.700 C8.880 19.550 8.850 19.400 8.900 19.230 L10.820 13 H5.230 C4.840 13 4.480 12.830 4.250 12.550 C4.100 12.360 3.930 12.050 4.020 11.650 L5.360 5.820 C5.460 5.350 5.970 5 6.570 5 H16 V13.610 Z M20 13 H17 V5 H20 Z" />
              </Solid>
              1
            </button>
            <button className="flex w-[161px] items-center gap-1.5">
              <Solid className="size-6">
                <path d="M15 5.630 L20.660 12 L15 18.370 V14 H14 C10.040 14 6.860 15 4.290 17.060 C6.160 13.480 9.300 11.510 14 10.940 L15 10.790 Z M14 3 V9.940 C6.040 11.080 3.140 16.020 2 21 C4.840 17.020 8.500 15.150 14 15.150 V21 L22 12 Z" />
              </Solid>
              COMPARTILHAR
            </button>
            <button className="flex w-[106px] items-center gap-1.5">
              <Solid className="size-6">
                <path d="M3 7 H15 V8 H3 Z M3 11 H14 V12 H3 Z M3 15 H11 V16 H3 Z M16.500 6.500 H18 V11 H22.500 V12.500 H18 V17 H16.500 V12.500 H12 V11 H16.500 Z" />
              </Solid>
              SALVAR
            </button>
            <button aria-label="Mais ações" className="flex size-6 items-center justify-center gap-[3px] pt-1">
              <span className="size-[3px] rounded-full bg-[#030303]" />
              <span className="size-[3px] rounded-full bg-[#030303]" />
              <span className="size-[3px] rounded-full bg-[#030303]" />
            </button>
          </div>
        </div>
      </section>
      <section className="w-[402px] shrink-0 pt-6">
        <div className="flex items-center">
          <div className="flex w-[350px] gap-2 overflow-hidden text-sm whitespace-nowrap [mask-image:linear-gradient(to_right,#000_88%,transparent_100%)]">
            <button className="h-8 w-[65px] shrink-0 rounded-full bg-[#030303] text-white">Todos</button>
            <button className="h-8 w-[95px] shrink-0 rounded-full border border-[#d5d5d5] bg-[#ececec]">JavaScript</button>
            <button className="h-8 shrink-0 rounded-full border border-[#d5d5d5] bg-[#ececec] px-3">
              Programação de computadores
            </button>
          </div>
          <button aria-label="Próximo" className="ml-4 flex size-6 items-center justify-center pt-1">
            <Line className="h-3 w-2" box="0 0 8 12">
              <path d="M1.500 1 L6.500 6 L1.500 11" />
            </Line>
          </button>
        </div>
        <a href="#" className="mt-[19px] flex gap-2">
          <span className="flex h-[94px] w-[168px] shrink-0 justify-center overflow-hidden bg-[#1c1b1d] font-[Inter,sans-serif] text-[22px]/6 font-black whitespace-nowrap text-white">
            Javascript&nbsp;<span className="text-[#f2cf2e] italic">#47</span>
          </span>
          <span className="text-sm/5 font-medium">Curso de Javascript #47 -</span>
        </a>
      </section>
    </div>
  );
}

function TaskSlot({ label, active = "", children }: { label: string; active?: string; children: ReactNode }) {
  return (
    <button aria-label={label} className={`flex w-12 items-center justify-center ${active}`}>
      {children}
    </button>
  );
}

function Taskbar() {
  return (
    <footer className="flex h-10 shrink-0 bg-[#231f22] text-white">
      <button aria-label="Iniciar" className="flex w-12 items-center justify-center bg-[#1f2024]">
        <Solid className="size-4" box="0 0 16 16">
          <path d="M0 2.300 L6.800 1.300 V7.600 H0 Z M7.600 1.200 L16 0 V7.600 H7.600 Z M0 8.400 H6.800 V14.700 L0 13.700 Z M7.600 8.400 H16 V16 L7.600 14.800 Z" />
        </Solid>
      </button>
      <label className="flex w-[344px] items-center border border-[#b8b8b8] bg-[#f2f2f2] pl-2.5 text-[#3a3a3a]">
        <Line className="size-[18px]" box="0 0 18 18">
          <circle cx="11.500" cy="6.500" r="5" />
          <path d="M7.700 10.300 L1.500 16.500" />
        </Line>
        <input
          aria-label="Pesquisa do Windows"
          placeholder="Digite aqui para pesquisar"
          className="ml-[11px] min-w-0 flex-1 bg-transparent text-sm outline-none placeholder:text-[#444]"
        />
      </label>
      <button aria-label="Visão de tarefas" className="mr-px flex w-[50px] items-center justify-center pr-0.5">
        <svg className="size-4" viewBox="0 0 16 16" fill="none" stroke="#eee" aria-hidden="true">
          <path d="M0.500 0 V2.500 H10.500 V0 M0.500 16 V13.500 H10.500 V16 M0.500 4.500 H10.500 V11.500 H0.500 Z M14.500 0 V3 M14.500 8 V16" />
          <rect x="13" y="4" width="3" height="3" fill="#fff" stroke="none" />
        </svg>
      </button>
      <div className="flex gap-px">
        <TaskSlot label="Opera" active="border-b-2 border-[#76b9ed] bg-[#4f4d4f] pt-0.5">
          <OperaLogo className="size-[23px]" />
        </TaskSlot>
        <button aria-label="Explorador de Arquivos" className="mx-1 flex w-10 items-center justify-center border-b-2 border-[#76b9ed] pt-0.5">
          <svg className="h-[18px] w-[22px]" viewBox="0 0 22 18" aria-hidden="true">
            <path d="M0 1 Q0 0 1 0 H8 L9.500 2 H21 Q22 2 22 3 V17 H0 Z" fill="#e2a01d" />
            <path d="M0 4 L10 2 H22 V17 H0 Z" fill="#fcd667" />
            <path d="M4 18 V11 Q4 9.500 5.500 9.500 H16.500 Q18 9.500 18 11 V18 H14 V14 H8 V18 Z" fill="#3a8edb" />
          </svg>
        </button>
        <TaskSlot label="Paint">
          <svg className="size-6" viewBox="0 0 24 24" aria-hidden="true">
            <path d="M11 5 C17 4 22 8 21.500 13 C21 19 15 22 9.500 21.500 C8 21.300 8 19 7 18 C5.500 16.500 2 19 1 15.500 C0 11 4 6 11 5 Z" fill="#c5e3f2" />
            <circle cx="5" cy="13" r="1.900" fill="#d84a38" />
            <circle cx="8.500" cy="8.800" r="1.900" fill="#58a846" />
            <circle cx="13.500" cy="8" r="1.900" fill="#f0b52c" />
            <circle cx="17" cy="15" r="1.900" fill="#2e66b8" />
            <circle cx="9.500" cy="14" r="1.600" fill="#2b3038" />
            <path d="M20 4 L12.500 23" stroke="#e8822e" strokeWidth="2.200" strokeLinecap="round" />
            <path d="M18.500 4.500 L20.500 0.500 L24 1.500 L21.500 6 Z" fill="#c09468" />
          </svg>
        </TaskSlot>
        <TaskSlot label="GIMP">
          <svg className="size-6" viewBox="0 0 24 24" aria-hidden="true">
            <path d="M1 9 L5 9.500 L8 5 L10 8 H15 L18 4 L19.500 9 L18 15 Q15 19 10 17.500 L6 13 L2 13 Z" fill="#6b6459" />
            <ellipse cx="2.800" cy="11" rx="2.300" ry="1.800" fill="#111" />
            <circle cx="9.500" cy="9.500" r="2" fill="#f2f2f2" />
            <circle cx="14" cy="9.500" r="2" fill="#f2f2f2" />
            <circle cx="9.500" cy="9.700" r="0.900" fill="#111" />
            <circle cx="14" cy="9.700" r="0.900" fill="#111" />
            <path d="M10 14.500 L22 18.500" stroke="#cfae7a" strokeWidth="1.400" />
          </svg>
        </TaskSlot>
        <TaskSlot label="VisualG">
          <svg className="size-6" viewBox="0 0 24 24" aria-hidden="true">
            <path d="M12 0.500 L23.500 12 L12 23.500 L0.500 12 Z" fill="#f3f6fc" stroke="#c9d5ec" />
            <path d="M10 3.500 L13 6.500 L11 8.500 L14 11 L16 9 M6 8 L9.500 11.500 L7 13.500 M4 11 L6 13 M10 19.500 L13 16.500 L10 13.500 L12 11.500 M14 19 L12.500 20.500 M16 13 L14 15 L17 17" fill="none" stroke="#2f5fb5" strokeWidth="1.600" />
            <path d="M16 11 L19.500 9 L21 12 L18 14 Z" fill="#1d3f8f" />
          </svg>
        </TaskSlot>
        <TaskSlot label="IDLE Python">
          <svg className="size-6" viewBox="0 0 24 24" aria-hidden="true">
            <path d="M1 0.500 H13 L17 4 V22 H1 Z" fill="#ececec" />
            <path d="M3 4 H12 M3 7 H15 M3 10 H12 M3 13 H10 M3 16 H10 M3 19 H10" stroke="#888" strokeWidth="1.200" />
            <path d="M17 8.500 C13.500 8.500 13.500 9.500 13.500 11.500 H17.500 V12.500 H12 C10 12.500 10 18 12 18.300 H13.500 C13.500 15.500 14 15 16.500 15 C20 15 20.500 14.500 20.500 11.500 C20.500 9 19.500 8.500 17 8.500 Z" fill="#3a76a8" />
            <path d="M17.500 24 C21 24 21 22.500 21 20.500 H17 V19.700 H22.500 C24.500 19.500 24.500 14 22.500 13.700 H21.300 C21.300 16.500 20.500 16.500 18 16.700 C14.500 17 14 17.500 14 20.500 C14 23.500 15 24 17.500 24 Z" fill="#fcd544" />
          </svg>
        </TaskSlot>
        <TaskSlot label="PyCharm">
          <span className="flex size-[22px] items-center justify-center bg-[linear-gradient(120deg,#21d789_0%,#21d789_40%,#c8f04a_65%,#07c3f2_100%)]">
            <span className="flex size-4 flex-col bg-black px-px pt-px text-[9px]/[9px] font-bold">
              PC
              <span className="mt-[3px] h-px w-1.5 bg-white" />
            </span>
          </span>
        </TaskSlot>
        <button aria-label="Visual Studio Code" className="mx-1 flex w-10 items-center justify-center border-b-2 border-[#76b9ed] pt-0.5">
          <svg className="size-6" viewBox="0 0 24 24" aria-hidden="true">
            <path d="M17 0.500 L23.500 3.500 V20.500 L17 23.500 L6 13.500 L2.500 16.500 L0.500 15.500 V14.500 L17 0.500 Z" fill="#0b7fd0" />
            <path d="M0.500 8.500 L2.500 7.500 L17 18.500 V23.500 L0.500 9.500 Z" fill="#1590e0" />
            <path d="M17 0.500 L23.500 3.500 V20.500 L17 23.500 Z" fill="#2aa6f2" />
            <path d="M17 7 V17 L10.500 12 Z" fill="#231f22" />
          </svg>
        </button>
        <TaskSlot label="Node.js">
          <svg className="size-6" viewBox="0 0 24 24" aria-hidden="true">
            <path d="M12 1 L22 6.500 V17.500 L12 23 L2 17.500 V6.500 Z" fill="#5a9a48" />
            <path d="M12 23 L2 17.500 V6.500 L12 12 Z" fill="#4b8a3e" />
            <path d="M12 1 L22 6.500 L12 15 L2 6.500 Z" fill="#62a850" />
          </svg>
        </TaskSlot>
        <TaskSlot label="Microsoft Edge">
          <svg className="size-6" viewBox="0 0 24 24" aria-hidden="true">
            <defs>
              <linearGradient id="edge" x1="0" y1="0.300" x2="1" y2="0.300">
                <stop offset="0" stopColor="#1b9de2" />
                <stop offset="0.500" stopColor="#2bc3d2" />
                <stop offset="1" stopColor="#62dd5a" />
              </linearGradient>
            </defs>
            <circle cx="12" cy="12" r="11.500" fill="#0f5fb4" />
            <path d="M0.500 12 C0.500 4 7 0.500 12 0.500 C19 0.500 23.500 5.500 23.500 11 C23.500 15 20.500 17 17.500 17 C15 17 13.500 16 14.500 14.500 C16.500 11 13 7.500 9 7.800 C4.500 8 1 10 0.500 12 Z" fill="url(#edge)" />
            <path d="M8 12 C7 18 12 22 20.500 19.500 C18.500 22.500 15 24 11 23.500 C4 22.500 1 17 3 13 C4.500 10 8 8.500 11 9.500 C9.500 9.500 8.300 10.500 8 12 Z" fill="#1673cf" />
            <path d="M14.500 14.500 C13.500 16 15 17 17.500 17 C20 17 22.500 15.800 23 14 L21.500 18.500 C16 21 10 18.500 10 14 C10 11.500 12 10 14 11 C15.200 12 15.200 13.300 14.500 14.500 Z" fill="#231f22" />
          </svg>
        </TaskSlot>
        <TaskSlot label="Google Chrome">
          <svg className="size-[22px]" viewBox="0 0 24 24" aria-hidden="true">
            <circle cx="12" cy="12" r="11.500" fill="#fbc116" />
            <path d="M12 12 L2 6.300 A11.500 11.500 0 0 1 22 6.500 H12 Z" fill="#e33b2e" />
            <path d="M2 6.300 A11.500 11.500 0 0 0 11 23.500 L16.500 14.500 L12 12 L7.500 14.500 Z" fill="#2da94f" />
            <circle cx="12" cy="12" r="5.500" fill="#fff" />
            <circle cx="12" cy="12" r="4.400" fill="#4286f5" />
          </svg>
        </TaskSlot>
        <TaskSlot label="Configurações do Windows">
          <svg className="size-5" viewBox="0 0 20 20" fill="none" stroke="#fff" aria-hidden="true">
            <circle cx="10" cy="10" r="5" strokeWidth="2.600" />
            <circle cx="10" cy="10" r="7.600" strokeWidth="3" strokeDasharray="3 2.970" strokeDashoffset="1.500" />
          </svg>
        </TaskSlot>
      </div>
      <div className="ml-auto flex items-center text-center text-[11px]/[17px]">
        <button aria-label="Ícones ocultos" className="flex w-6 justify-center">
          <Line className="h-2 w-3" box="0 0 12 8">
            <path d="M1 6.500 L6 1.500 L11 6.500" />
          </Line>
        </button>
        <button aria-label="OneDrive" className="flex w-6 justify-center">
          <svg className="h-[11px] w-4" viewBox="0 0 16 11" aria-hidden="true">
            <path d="M4 10.500 A3.500 3.500 0 0 1 3 4 A4.500 4.500 0 0 1 11 3 A4 4 0 0 1 12.500 10.500 Z" fill="#c7c7c7" />
            <path d="M4 10.500 A3.500 3.500 0 0 1 2.500 4.200 Q5 3.500 8 6 L14.800 9.500 Q14 10.500 12.500 10.500 Z" fill="#f4f4f4" />
          </svg>
        </button>
        <button aria-label="Rede" className="flex w-6 justify-center">
          <svg className="h-[15px] w-[17px]" viewBox="0 0 17 15" fill="none" stroke="#fff" aria-hidden="true">
            <path d="M5 1.500 H16.500 V9.500 H4.500 V5 M10.500 9.500 V13.500 M6 13.500 H14 M0.500 0.500 H4.500 V4.500 H0.500 Z M2.500 4.500 V12" />
          </svg>
        </button>
        <button className="flex w-[34px] flex-col items-center">
          <span>POR</span>
          <span>PTB</span>
        </button>
        <button className="flex w-[74px] flex-col items-center">
          <span>10:59</span>
          <span>18/10/2021</span>
        </button>
        <button aria-label="Notificações do Windows" className="relative flex h-10 w-[47px] items-center justify-center border-r border-[#6a676a] pr-2.5">
          <svg className="h-[15px] w-4" viewBox="0 0 16 15" aria-hidden="true">
            <path d="M0 0 H16 V12 H7 L4 15 V12 H0 Z" fill="#fff" />
            <path d="M3 3.500 H13 M3 6 H13 M3 8.500 H10" stroke="#231f22" />
          </svg>
          <span className="absolute top-[19px] left-[17px] flex size-4 items-center justify-center rounded-full border border-[#999] bg-[#3a383a] text-[10px]/4">
            3
          </span>
        </button>
        <span className="w-1" />
      </div>
    </footer>
  );
}

export default function App() {
  return (
    <div className="flex h-screen flex-col overflow-hidden font-['Open_Sans','Noto_Sans',sans-serif]">
      <div className="flex min-h-0 flex-1">
        <Sidebar />
        <div className="flex min-w-0 flex-1 flex-col">
          <TabBar />
          <div className="bg-[#3b4551]">
            <AddressBar />
            <BookmarkBar />
          </div>
          <div className="flex min-h-0 flex-1 bg-[#f9f9f9]">
            <main className="flex min-w-0 flex-1 flex-col overflow-hidden">
              <YouTubeHeader />
              <Player />
              <VideoDetails />
            </main>
            <div className="w-4 shrink-0 px-1 pt-1">
              <div className="h-[132px] rounded-full bg-[#606060]" />
            </div>
          </div>
        </div>
      </div>
      <Taskbar />
    </div>
  );
}
